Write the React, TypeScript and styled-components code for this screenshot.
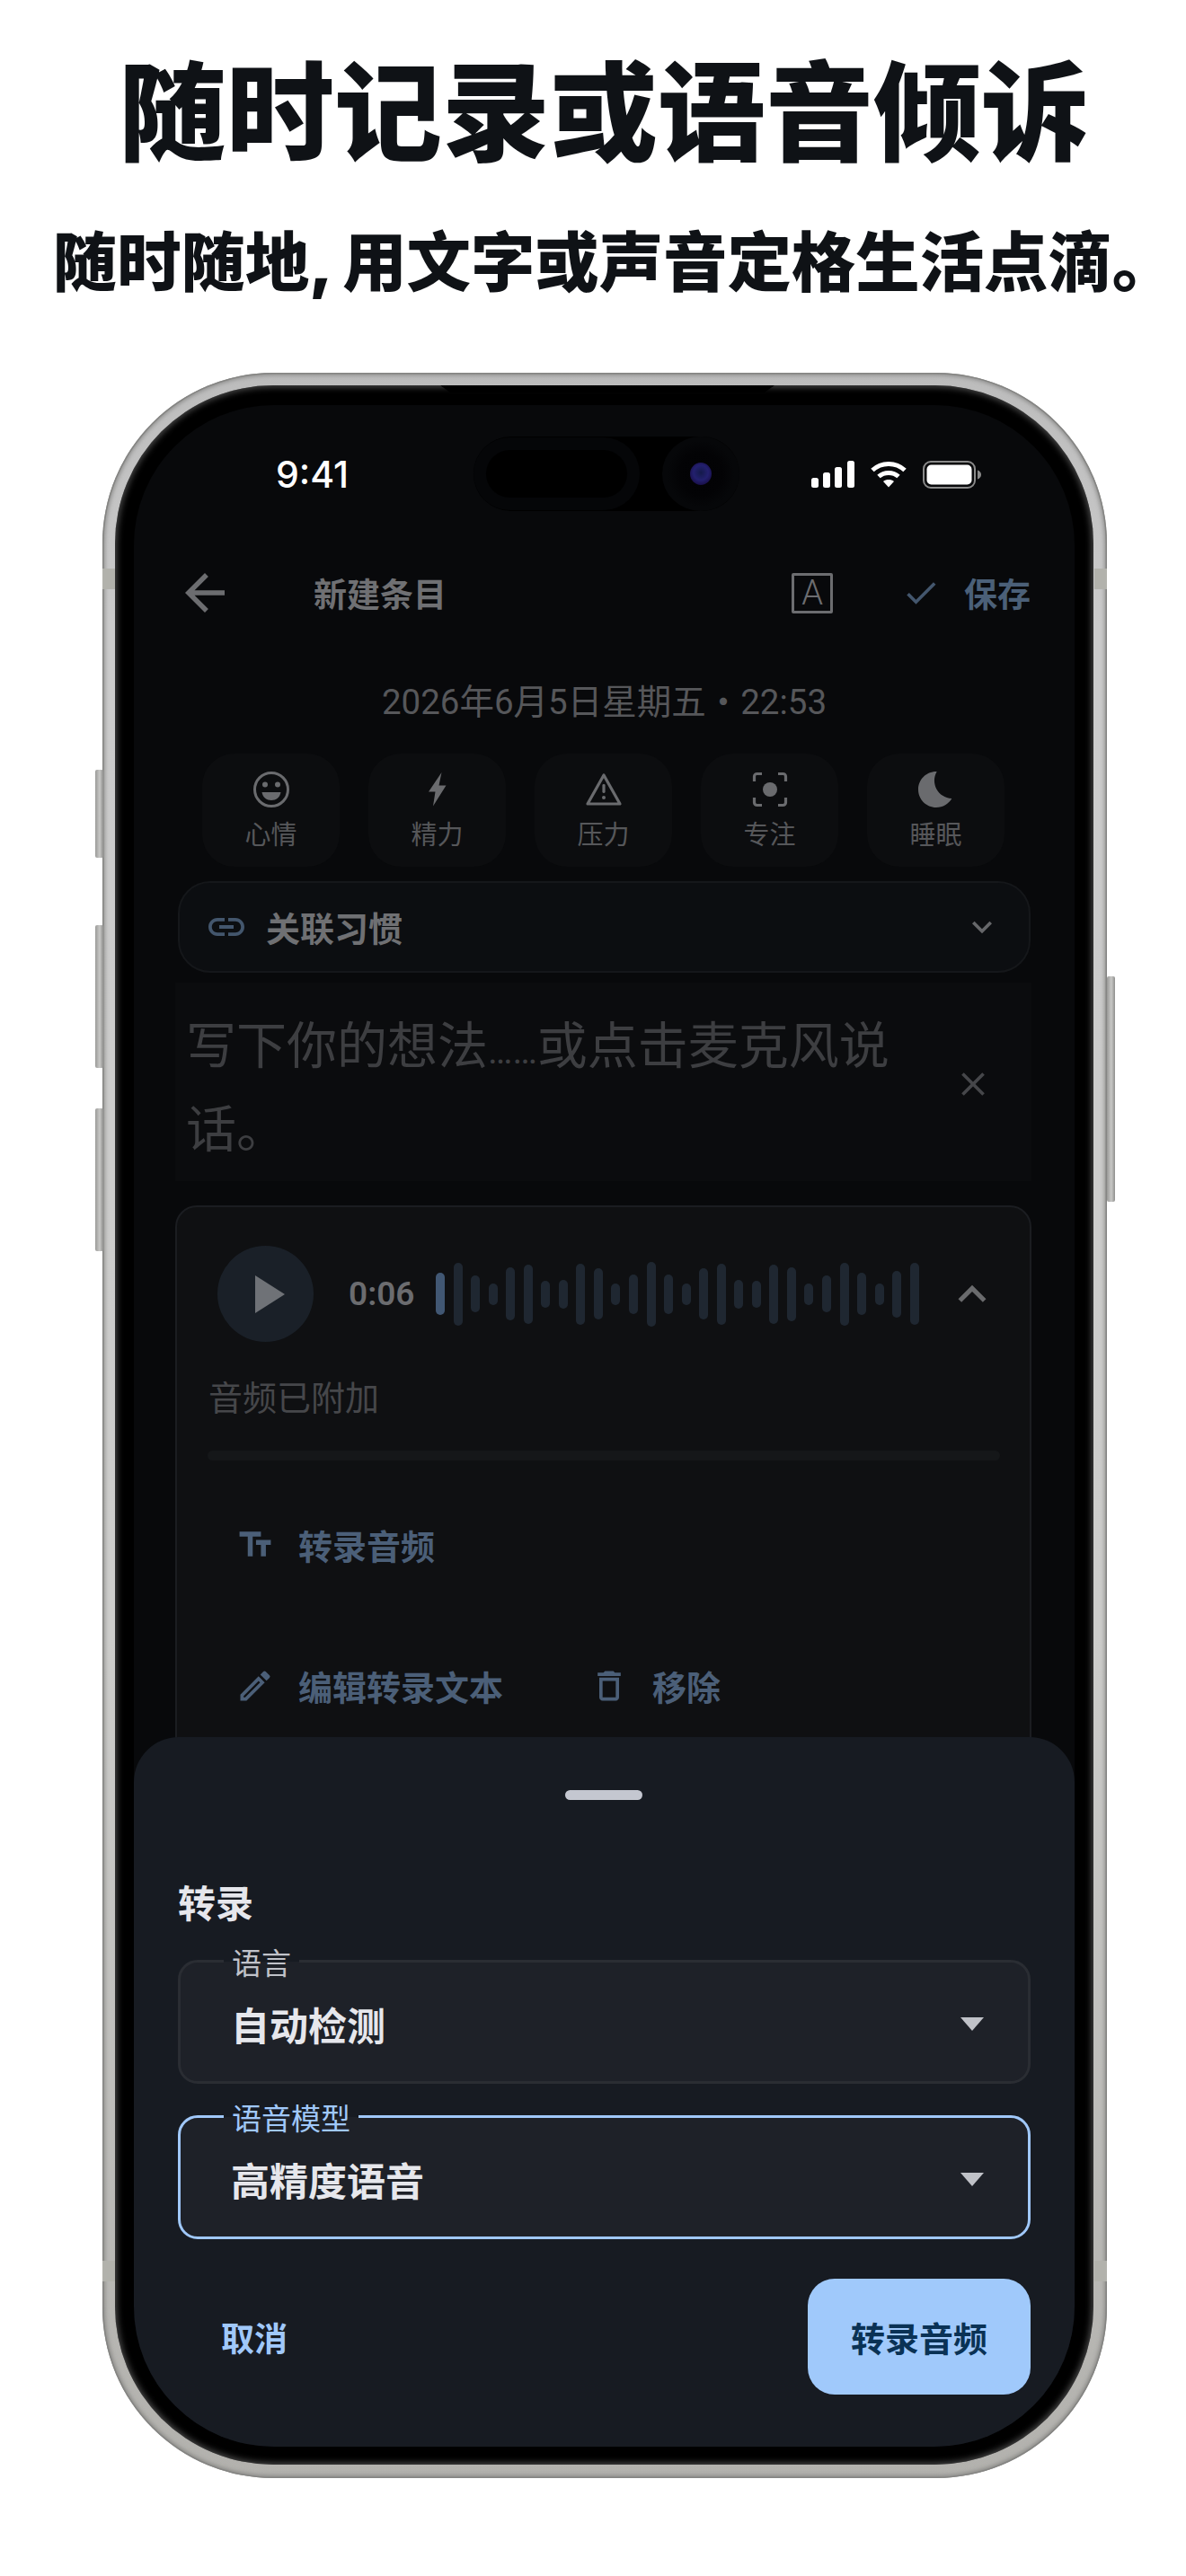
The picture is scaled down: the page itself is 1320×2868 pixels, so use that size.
import React from "react";
import styled, { createGlobalStyle } from "styled-components";
import {
    MdArrowBack,
    MdBedtime,
    MdCheck,
    MdClose,
    MdExpandLess,
    MdExpandMore,
    MdLink,
    MdOutlineDelete,
    MdOutlineEdit,
    MdPlayArrow,
    MdTextFields,
} from "react-icons/md";

const CJK = '"Noto Sans CJK SC", sans-serif';
const UI = `Roboto, "Noto Sans CJK SC", sans-serif`;

const GlobalStyle = createGlobalStyle`
    html, body {
        margin: 0;
        padding: 0;
        background: #ffffff;
    }
    * {
        box-sizing: border-box;
    }
`;

const Page = styled.div`
    width: 1320px;
    height: 2868px;
    padding: 0 0 0 24px;
    background: #ffffff;
    overflow: hidden;
    display: flex;
    flex-direction: column;
    align-items: center;
`;

const Headline = styled.h1`
    margin: 43px 0 0;
    font: 900 120px/150px ${CJK};
    color: #0f1216;
    white-space: nowrap;
`;

const Subline = styled.h2`
    margin: 54px 0 0 24px;
    font: 900 71.4px/90px Inter, ${CJK};
    color: #0f1216;
    white-space: nowrap;
`;

const PhoneShell = styled.div`
    position: relative;
    flex: none;
    width: 1118px;
    height: 2344px;
    margin: 78px 0 0 2px;
    padding: 14px 15px 15px 14px;
    border-radius: 190px;
    background: linear-gradient(180deg, #bcbcbc 0%, #cbcbcb 12%, #cdcdcb 60%, #b2b1ad 100%);
    box-shadow: inset 0 0 0 1.5px #858583, inset 0 0 4px 3px rgba(105, 105, 103, 0.55);
`;

const SideButton = styled.div<{ $side: "left" | "right"; $top: number; $height: number }>`
    position: absolute;
    top: ${(p) => p.$top}px;
    ${(p) => (p.$side === "left" ? "left: -8px;" : "right: -9px;")}
    width: 9px;
    height: ${(p) => p.$height}px;
    border-radius: 2px;
    background: linear-gradient(90deg, #9a9a98, #c8c8c6 55%, #8f8f8d);
`;

const AntennaBand = styled.div<{ $side: "left" | "right"; $top: number }>`
    position: absolute;
    top: ${(p) => p.$top}px;
    ${(p) => (p.$side === "left" ? "left: 0;" : "right: 0;")}
    width: 14px;
    height: 23px;
    background: #b2b2ac;
`;

const Bezel = styled.div`
    position: relative;
    height: 100%;
    padding: 22px 21px 20px;
    border-radius: 176px;
    background: #000000;
    box-shadow: inset 0 0 7px 2px rgba(125, 125, 125, 0.6);
`;

const Speaker = styled.div`
    position: absolute;
    top: 0;
    left: 362px;
    width: 372px;
    height: 8px;
    background: #000000;
    clip-path: polygon(0 0, 100% 0, 97% 100%, 3% 100%);
`;

const Screen = styled.div`
    position: relative;
    height: 100%;
    border-radius: 156px;
    background: #08090b;
    overflow: hidden;
    display: flex;
    flex-direction: column;
`;

const StatusBar = styled.div`
    flex: none;
    height: 154px;
    padding: 0 104px 0 158px;
    display: flex;
    align-items: center;
    justify-content: space-between;
`;

const Clock = styled.span`
    font: 500 41px/50px Inter, sans-serif;
    color: #ffffff;
`;

const StatusIcons = styled.div`
    display: flex;
    align-items: center;
    gap: 18px;

    svg {
        display: block;
    }
`;

const Island = styled.div`
    position: absolute;
    top: 35px;
    left: 378px;
    width: 296px;
    height: 83px;
    border-radius: 42px;
    background: #000000;
`;

const IslandPill = styled.div`
    position: absolute;
    top: 15px;
    left: 14px;
    width: 157px;
    height: 53px;
    border-radius: 27px;
    background: #000000;
    box-shadow: 0 0 0 14px #050608;
`;

const CameraRing = styled.div`
    position: absolute;
    top: 0;
    right: 0;
    width: 86px;
    height: 83px;
    border-radius: 50%;
    background: radial-gradient(circle at 50% 50%, #020204 0%, #030305 40%, #060709 62%);
    display: flex;
    align-items: center;
    justify-content: center;
`;

const CameraLens = styled.div`
    width: 24px;
    height: 25px;
    border-radius: 50%;
    background: radial-gradient(circle at 50% 45%, #141a4a 0%, #23206e 45%, #1b1250 70%, #07061c 100%);
`;

const HeaderBar = styled.div`
    flex: none;
    height: 110px;
    padding: 0 49px 0 53px;
    display: flex;
    align-items: center;
`;

const BackIcon = styled(MdArrowBack)`
    flex: none;
    font-size: 66px;
    margin-left: -7px;
    color: #6c6d70;
`;

const HeaderTitle = styled.span`
    margin-left: 88px;
    flex: 1;
    font: 600 37px/50px ${CJK};
    color: #6f7073;
`;

const FontBadge = styled.span`
    flex: none;
    width: 46px;
    height: 45px;
    border: 3.5px solid #6c6d70;
    border-radius: 2px;
    display: flex;
    align-items: center;
    justify-content: center;
    font: 300 38px/38px Roboto, sans-serif;
    color: #6c6d70;
`;

const SaveIcon = styled(MdCheck)`
    flex: none;
    margin-left: 76px;
    font-size: 44px;
    color: #43566d;
`;

const SaveLabel = styled.span`
    margin-left: 26px;
    font: 700 37px/50px ${CJK};
    color: #4b6078;
`;

const DateLine = styled.div`
    flex: none;
    height: 124px;
    padding: 10px 0 0 0;
    display: flex;
    align-items: center;
    justify-content: center;
    font: 400 38.5px/50px ${UI};
    color: #56575a;
`;

const ChipRow = styled.div`
    flex: none;
    display: flex;
    justify-content: space-between;
    margin: 0 78px 0 76px;
`;

const Chip = styled.div`
    width: 153px;
    height: 126px;
    padding-top: 19px;
    border-radius: 36px;
    background: #0c0d0f;
    display: flex;
    flex-direction: column;
    align-items: center;
    color: #6a6b6e;

    svg {
        display: block;
    }
`;

const ChipLabel = styled.span`
    margin-top: 8px;
    font: 400 29px/38px ${CJK};
    color: #56575a;
`;

const LinkRow = styled.div`
    flex: none;
    height: 102px;
    margin: 16px 49px 0;
    padding: 0 38px 0 28px;
    border: 2px solid #15171a;
    border-radius: 36px;
    background: #0c0e11;
    display: flex;
    align-items: center;
`;

const LinkIcon = styled(MdLink)`
    flex: none;
    font-size: 48px;
    color: #43566d;
`;

const LinkLabel = styled.span`
    flex: 1;
    margin-left: 20px;
    font: 600 38px/50px ${CJK};
    color: #6f7073;
`;

const ChevronDown = styled(MdExpandMore)`
    flex: none;
    font-size: 44px;
    margin-right: -8px;
    color: #66676a;
`;

const NoteArea = styled.div`
    flex: none;
    height: 221px;
    margin: 11px 48px 0 46px;
    padding: 19px 100px 0 12px;
    position: relative;
    background: #0b0c0e;
    font: 400 56px/93px ${CJK};
    color: #3d3e41;
`;

const NoteLine = styled.div`
    white-space: nowrap;
`;

const NoteDots = styled.span`
    font: 400 41px/0 Roboto, sans-serif;
`;

const ClearIcon = styled(MdClose)`
    position: absolute;
    top: 91px;
    right: 43px;
    font-size: 44px;
    color: #46474a;
`;

const AudioCard = styled.div`
    flex: none;
    height: 800px;
    margin: 27px 48px 0 46px;
    padding: 43px 46px 0 45px;
    border: 2px solid #1b1d21;
    border-radius: 24px;
    background: #0f1012;
`;

const PlayerRow = styled.div`
    display: flex;
    align-items: center;
`;

const PlayButton = styled.div`
    flex: none;
    width: 107px;
    height: 107px;
    border-radius: 50%;
    background: #1a2028;
    display: flex;
    align-items: center;
    justify-content: center;
    font-size: 72px;
    color: #6f7277;
`;

const Duration = styled.span`
    flex: none;
    width: 75px;
    margin-left: 39px;
    font: 600 37px/50px ${UI};
    color: #6b6c6f;
`;

const Wave = styled.div`
    flex: none;
    width: 538px;
    margin-left: 22px;
    display: flex;
    align-items: center;
    justify-content: space-between;
`;

const WaveBar = styled.span<{ $active?: boolean }>`
    width: 10px;
    border-radius: 5px;
    background: ${(p) => (p.$active ? "#415773" : "#1f2731")};
`;

const ChevronUp = styled(MdExpandLess)`
    flex: none;
    margin-left: 28px;
    font-size: 62px;
    color: #6a6b6d;
`;

const Caption = styled.div`
    margin: 35px 0 0 -10px;
    font: 400 38px/50px ${CJK};
    color: #46474a;
`;

const ProgressTrack = styled.div`
    height: 11px;
    margin: 36px -13px 0 -11px;
    border-radius: 6px;
    background: #151719;
`;

const ActionRow = styled.div<{ $top: number }>`
    margin-top: ${(p) => p.$top}px;
    display: flex;
    align-items: center;
    font: 600 38px/50px ${CJK};
    color: #4b5f78;
`;

const ActionItem = styled.span<{ $left: number }>`
    margin-left: ${(p) => p.$left}px;
    display: flex;
    align-items: center;
    gap: 26px;

    svg {
        flex: none;
        font-size: 44px;
        color: #4b5f78;
    }
`;

const Sheet = styled.div`
    position: absolute;
    left: 0;
    right: 0;
    bottom: 0;
    height: 790px;
    padding: 59px 49px 0 49px;
    border-radius: 50px 50px 0 0;
    background: #171b22;
    display: flex;
    flex-direction: column;
`;

const Handle = styled.div`
    flex: none;
    align-self: center;
    width: 86px;
    height: 11px;
    margin-left: -2px;
    border-radius: 6px;
    background: #c4c7d0;
`;

const SheetTitle = styled.div`
    margin-top: 83px;
    font: 700 42px/60px ${CJK};
    color: #e6e7ec;
`;

const Select = styled.div<{ $focused?: boolean; $top: number }>`
    position: relative;
    flex: none;
    height: 138px;
    margin-top: ${(p) => p.$top}px;
    padding: 4px 49px 0 56px;
    border: ${(p) => (p.$focused ? "3px solid #a0c8fa" : "3px solid #2a2d33")};
    border-radius: 22px;
    background: #1e2128;
    display: flex;
    align-items: center;
    justify-content: space-between;
`;

const SelectLabel = styled.span<{ $focused?: boolean }>`
    position: absolute;
    top: -17px;
    left: 48px;
    padding: 0 9px;
    font: 400 33px/33px ${CJK};
    color: ${(p) => (p.$focused ? "#a0c8fa" : "#c0c2c9")};
    background: linear-gradient(180deg, #171b22 50%, #1e2128 50%);
`;

const SelectValue = styled.span`
    font: 600 43px/60px ${CJK};
    color: #e6e7ec;
`;

const SelectCaret = styled.span`
    width: 0;
    height: 0;
    border-left: 13px solid transparent;
    border-right: 13px solid transparent;
    border-top: 15px solid #c0c2c8;
`;

const SheetActions = styled.div`
    margin-top: 44px;
    display: flex;
    align-items: center;
    justify-content: space-between;
`;

const CancelButton = styled.span`
    margin-left: 48px;
    font: 700 37px/50px ${CJK};
    color: #a0c8fa;
`;

const PrimaryButton = styled.span`
    width: 248px;
    height: 129px;
    border-radius: 30px;
    background: #a0c9fb;
    display: flex;
    align-items: center;
    justify-content: center;
    font: 700 38px/50px ${CJK};
    color: #0a3255;
`;

const SmileIcon = () => (
    <svg width="42" height="42" viewBox="0 0 42 42" fill="none">
        <circle cx="21" cy="21" r="18.5" stroke="currentColor" strokeWidth="3" />
        <circle cx="14" cy="15.5" r="3" fill="currentColor" />
        <circle cx="28" cy="15.5" r="3" fill="currentColor" />
        <path d="M10.5 24h21c-1 6-5.2 9-10.5 9s-9.5-3-10.5-9z" fill="currentColor" />
    </svg>
);

const BoltIcon = () => (
    <svg width="42" height="42" viewBox="0 0 42 42" fill="currentColor">
        <path d="M25.5 2L11 23.5h7.5L16 39.5 30.5 16.5h-8z" />
    </svg>
);

const WarningIcon = () => (
    <svg width="42" height="42" viewBox="0 0 42 42" fill="none">
        <path d="M21 5L39 37H3z" stroke="currentColor" strokeWidth="3.2" strokeLinejoin="round" />
        <rect x="19.4" y="15" width="3.2" height="10" rx="1.4" fill="currentColor" />
        <circle cx="21" cy="30" r="2" fill="currentColor" />
    </svg>
);

const FocusIcon = () => (
    <svg width="42" height="42" viewBox="0 0 42 42" fill="none">
        <path
            d="M12 3.5H6.5a3 3 0 0 0-3 3V12M30 3.5h5.5a3 3 0 0 1 3 3V12M12 38.5H6.5a3 3 0 0 1-3-3V30M30 38.5h5.5a3 3 0 0 0 3-3V30"
            stroke="currentColor"
            strokeWidth="3.2"
        />
        <circle cx="21" cy="21" r="8" fill="currentColor" />
    </svg>
);

const MoonIcon = styled(MdBedtime)`
    font-size: 48px;
    margin: -3px 0;
`;

const moods = [
    { label: "心情", icon: <SmileIcon /> },
    { label: "精力", icon: <BoltIcon /> },
    { label: "压力", icon: <WarningIcon /> },
    { label: "专注", icon: <FocusIcon /> },
    { label: "睡眠", icon: <MoonIcon /> },
];

const waveHeights = [47, 70, 41, 24, 59, 66, 30, 32, 68, 57, 24, 44, 72, 44, 24, 57, 68, 32, 30, 66, 60, 24, 41, 70, 47, 24, 52, 69];

const SignalIcon = () => (
    <svg width="48" height="30" viewBox="0 0 48 30" fill="#ffffff">
        <rect x="0" y="19" width="8" height="11" rx="2.5" />
        <rect x="13" y="13" width="8" height="17" rx="2.5" />
        <rect x="26" y="7" width="8" height="23" rx="2.5" />
        <rect x="40" y="0" width="8" height="30" rx="2.5" />
    </svg>
);

const WifiIcon = () => (
    <svg width="40" height="30" viewBox="0 0 40 30" fill="none" stroke="#ffffff" strokeWidth="5">
        <path d="M2 10.5C12 1 28 1 38 10.5" />
        <path d="M9 17.5C15 12 25 12 31 17.5" />
        <path d="M20 29.5l-6-6.5c3.5-2.6 8.5-2.6 12 0z" fill="#ffffff" stroke="none" />
    </svg>
);

const BatteryIcon = () => (
    <svg width="65" height="31" viewBox="0 0 65 31" fill="none">
        <rect x="1" y="1" width="57" height="29" rx="8" stroke="#8a8a8a" strokeWidth="2" />
        <rect x="4.5" y="4.5" width="50" height="22" rx="5" fill="#ffffff" />
        <path d="M61 10.5c2.5 0.8 4 2.6 4 5s-1.5 4.2-4 5z" fill="#8a8a8a" />
    </svg>
);

const App = () => {
    return (
        <Page>
            <GlobalStyle />
            <Headline>随时记录或语音倾诉</Headline>
            <Subline>随时随地, 用文字或声音定格生活点滴。</Subline>

            <PhoneShell>
                <SideButton $side="left" $top={442} $height={98} />
                <SideButton $side="left" $top={615} $height={159} />
                <SideButton $side="left" $top={819} $height={159} />
                <SideButton $side="right" $top={672} $height={251} />
                <AntennaBand $side="left" $top={218} />
                <AntennaBand $side="right" $top={218} />
                <AntennaBand $side="left" $top={2102} />
                <AntennaBand $side="right" $top={2102} />

                <Bezel>
                    <Speaker />
                    <Screen>
                        <StatusBar>
                            <Clock>9:41</Clock>
                            <StatusIcons>
                                <SignalIcon />
                                <WifiIcon />
                                <BatteryIcon />
                            </StatusIcons>
                        </StatusBar>
                        <Island>
                            <IslandPill />
                            <CameraRing>
                                <CameraLens />
                            </CameraRing>
                        </Island>

                        <HeaderBar>
                            <BackIcon />
                            <HeaderTitle>新建条目</HeaderTitle>
                            <FontBadge>A</FontBadge>
                            <SaveIcon />
                            <SaveLabel>保存</SaveLabel>
                        </HeaderBar>

                        <DateLine>2026年6月5日星期五・22:53</DateLine>

                        <ChipRow>
                            {moods.map((m) => (
                                <Chip key={m.label}>
                                    {m.icon}
                                    <ChipLabel>{m.label}</ChipLabel>
                                </Chip>
                            ))}
                        </ChipRow>

                        <LinkRow>
                            <LinkIcon />
                            <LinkLabel>关联习惯</LinkLabel>
                            <ChevronDown />
                        </LinkRow>

                        <NoteArea>
                            <NoteLine>
                                写下你的想法<NoteDots>……</NoteDots>或点击麦克风说
                            </NoteLine>
                            <NoteLine>话。</NoteLine>
                            <ClearIcon />
                        </NoteArea>

                        <AudioCard>
                            <PlayerRow>
                                <PlayButton>
                                    <MdPlayArrow />
                                </PlayButton>
                                <Duration>0:06</Duration>
                                <Wave>
                                    {waveHeights.map((h, i) => (
                                        <WaveBar key={i} $active={i === 0} style={{ height: h }} />
                                    ))}
                                </Wave>
                                <ChevronUp />
                            </PlayerRow>
                            <Caption>音频已附加</Caption>
                            <ProgressTrack />
                            <ActionRow $top={69}>
                                <ActionItem $left={20}>
                                    <MdTextFields />
                                    转录音频
                                </ActionItem>
                            </ActionRow>
                            <ActionRow $top={107}>
                                <ActionItem $left={20}>
                                    <MdOutlineEdit />
                                    编辑转录文本
                                </ActionItem>
                                <ActionItem $left={96}>
                                    <MdOutlineDelete />
                                    移除
                                </ActionItem>
                            </ActionRow>
                        </AudioCard>

                        <Sheet>
                            <Handle />
                            <SheetTitle>转录</SheetTitle>
                            <Select $top={35}>
                                <SelectLabel>语言</SelectLabel>
                                <SelectValue>自动检测</SelectValue>
                                <SelectCaret />
                            </Select>
                            <Select $top={35} $focused>
                                <SelectLabel $focused>语音模型</SelectLabel>
                                <SelectValue>高精度语音</SelectValue>
                                <SelectCaret />
                            </Select>
                            <SheetActions>
                                <CancelButton>取消</CancelButton>
                                <PrimaryButton>转录音频</PrimaryButton>
                            </SheetActions>
                        </Sheet>
                    </Screen>
                </Bezel>
            </PhoneShell>
        </Page>
    );
};

export default App;
